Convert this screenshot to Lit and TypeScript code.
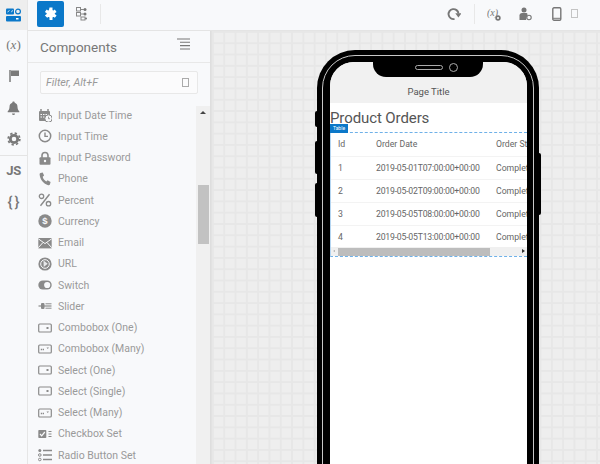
import { LitElement, html, css, svg } from "lit";
import { customElement } from "lit/decorators.js";

const G = "#8a8a8a";
const icons: Record<string, any> = {
  datetime: svg`<rect x="1" y="3" width="11" height="10" rx="1" fill="${G}"/><path d="M3 1v3M10 1v3" stroke="${G}" stroke-width="1.5"/><path d="M2.5 6.5h8M2.5 9h5" stroke="#f8f9fb" stroke-width="1" stroke-dasharray="1.5 1"/><circle cx="10.5" cy="10.5" r="3.7" fill="#f8f9fb" stroke="${G}" stroke-width="1"/><path d="M10.5 8.7v2h1.5" fill="none" stroke="${G}" stroke-width=".8"/>`,
  time: svg`<circle cx="7" cy="7" r="5.7" fill="none" stroke="${G}" stroke-width="1.5"/><path d="M7 3.5V7.4h3" fill="none" stroke="${G}" stroke-width="1.4"/>`,
  lock: svg`<path d="M4 7V4.5a3 3 0 0 1 6 0V7" fill="none" stroke="${G}" stroke-width="1.6"/><rect x="1.5" y="6.3" width="11" height="7.5" rx="1" fill="${G}"/><circle cx="7" cy="10" r="1.2" fill="#f8f9fb"/>`,
  phone: svg`<path d="M2.5 1l2.2-.6 1.4 3.2-1.4 1.1c.4 2 1.8 3.8 3.6 4.7l1.3-1.2 3 1.7-.7 2.5c-.2.6-1 1-1.7.8C5.6 11.900 2 7.500 1.600 2.300c0-.6.3-1.100.9-1.300z" fill="${G}"/>`,
  percent: svg`<circle cx="3.500" cy="3.300" r="2.200" fill="none" stroke="${G}" stroke-width="1.300"/><circle cx="10.500" cy="10.700" r="2.200" fill="none" stroke="${G}" stroke-width="1.300"/><path d="M11.500 1.200L2.500 12.800" stroke="${G}" stroke-width="1.400"/>`,
  currency: svg`<circle cx="7" cy="7" r="6.700" fill="${G}"/><text x="7" y="10.300" text-anchor="middle" font-size="9.500" font-weight="700" fill="#f8f9fb" font-family="Liberation Sans, sans-serif">$</text>`,
  email: svg`<rect x="0.300" y="2" width="13.400" height="10.400" fill="${G}"/><path d="M0.300 2.800L7 7.600l6.700-4.800M0.300 11.700L5 6.500M13.700 11.700L9 6.500" fill="none" stroke="#f8f9fb" stroke-width="1"/>`,
  url: svg`<circle cx="7" cy="7" r="6.600" fill="${G}"/><circle cx="7" cy="7" r="4.300" fill="none" stroke="#f8f9fb" stroke-width="1"/><path d="M5.500 3.500l4.200 3.300-4 3.200z" fill="#f8f9fb" opacity=".85"/>`,
  toggle: svg`<rect x="0.300" y="2.500" width="13.400" height="9" rx="4.500" fill="${G}"/><circle cx="9.200" cy="7" r="3.100" fill="#f8f9fb"/>`,
  slider: svg`<path d="M0.500 7h13" stroke="${G}" stroke-width="1.200"/><rect x="3" y="4" width="3.500" height="6" rx="1" fill="${G}"/><path d="M7.500 4.800h6M7.500 9.200h6" stroke="${G}" stroke-width="1"/>`,
  combo: svg`<rect x="0.700" y="3" width="12.600" height="8" rx="1" fill="none" stroke="${G}" stroke-width="1.200"/><rect x="8.500" y="6" width="2" height="2" fill="${G}"/>`,
  many: svg`<rect x="0.700" y="3" width="12.600" height="8" rx="1" fill="none" stroke="${G}" stroke-width="1.200"/><path d="M2.800 7.500h3.400" stroke="${G}" stroke-width="1.300" stroke-dasharray="1.300 .6"/><path d="M8.500 5.500h2.500L9.750 7z" fill="${G}"/>`,
  check: svg`<rect x="0.300" y="3" width="8" height="8" rx=".8" fill="${G}"/><path d="M2 7l1.700 1.800L6.800 5" fill="none" stroke="#f8f9fb" stroke-width="1.200"/><path d="M10.500 4.500h3M10.500 7h3M10.500 9.500h3" stroke="${G}" stroke-width="1"/>`,
  radio: svg`<circle cx="1.800" cy="2.500" r="1.500" fill="${G}"/><circle cx="1.800" cy="7" r="1.300" fill="none" stroke="${G}"/><circle cx="1.800" cy="11.500" r="1.300" fill="none" stroke="${G}"/><path d="M5 2.500h9M5 7h9M5 11.500h9" stroke="${G}" stroke-width="1.400"/>`,
};

const items: [string, string][] = [
  ["datetime", "Input Date Time"], ["time", "Input Time"], ["lock", "Input Password"], ["phone", "Phone"],
  ["percent", "Percent"], ["currency", "Currency"], ["email", "Email"], ["url", "URL"], ["toggle", "Switch"],
  ["slider", "Slider"], ["combo", "Combobox (One)"], ["many", "Combobox (Many)"], ["combo", "Select (One)"],
  ["combo", "Select (Single)"], ["many", "Select (Many)"], ["check", "Checkbox Set"], ["radio", "Radio Button Set"],
];

const rows = [
  ["1", "2019-05-01T07:00:00+00:00"], ["2", "2019-05-02T09:00:00+00:00"],
  ["3", "2019-05-05T08:00:00+00:00"], ["4", "2019-05-05T13:00:00+00:00"],
];

const icon = (name: string) => html`<svg class="ico" viewBox="0 0 14 14">${icons[name]}</svg>`;

@customElement("app-root")
export class AppRoot extends LitElement {
  static styles = css`
    :host { display: block; width: 600px; height: 464px; overflow: hidden; font-family: Roboto, "Open Sans", sans-serif; color: #777; background: #f8f9fb; }
    * { box-sizing: border-box; }
    .app { display: flex; width: 600px; height: 464px; }
    .rail { width: 28px; flex: none; display: flex; flex-direction: column; align-items: center; background: #f8f9fb; border-right: 1px solid #e6e6e6; }
    .rail-item { width: 100%; height: 31.300px; flex: none; display: flex; align-items: center; justify-content: center; color: #7a7a7a; }
    .rail-item.active { background: #eeeeee; height: 29.500px; }
    .rail-sep { border-top: 1px solid #e4e4e4; }
    .rail-text { font-family: "Liberation Serif", serif; font-size: 13px; color: #777; }
    .rail-js { font-weight: 700; font-size: 13px; letter-spacing: -0.400px; color: #777; }
    .rail-brace { font-weight: 500; font-size: 15px; gap: 2px; color: #777; }
    .main { flex: 1; display: flex; flex-direction: column; min-width: 0; }
    .toolbar { height: 31px; flex: none; display: flex; align-items: center; padding-left: 9px; padding-bottom: 3px; background: #f8f9fb; border-bottom: 1px solid #e4e4e4; }
    .tool-active { width: 27px; height: 26px; background: #0b78c9; border-radius: 2px; display: flex; align-items: center; justify-content: center; }
    .tool { margin-left: 8px; width: 18px; display: flex; justify-content: center; }
    .sep { width: 1px; height: 20px; background: #e8e8e8; margin-left: 10px; }
    .spacer { flex: 1; }
    .tright { display: flex; align-items: center; padding-right: 22px; }
    .t { display: flex; justify-content: center; }
    .sep-r { margin: 0 12px 0 13px; }
    .m20 { margin-left: 17px; }
    .m21 { margin-left: 20px; }
    .m9 { margin-left: 9px; }
    .small { width: 7px; height: 9px; border: 1px solid #c4c4c4; }
    .body { flex: 1; display: flex; min-height: 0; }
    .panel { width: 183px; flex: none; display: flex; flex-direction: column; background: #f8f9fb; border-right: 1px solid #dedede; }
    .phead { height: 32px; flex: none; display: flex; align-items: center; justify-content: space-between; padding: 1px 20px 0 12px; border-bottom: 1px solid #e8e8e8; font-size: 13.500px; color: #777; }
    .menu { margin-bottom: 6px; }
    .filter-wrap { padding: 8px 12px 0; height: 43px; flex: none; }
    .filter { height: 23px; border: 1px solid #e8e8e8; border-radius: 2px; background: #fbfbfc; display: flex; align-items: center; justify-content: space-between; padding: 0 8px 0 5px; font-size: 10.800px; font-style: italic; color: #999; }
    .glyph { width: 7px; height: 9px; border: 1px solid #aaa; }
    .list-wrap { flex: 1; display: flex; min-height: 0; }
    .list { flex: 1; margin-top: -1.500px; overflow: hidden; }
    .item { height: 21.250px; display: flex; align-items: center; gap: 6px; padding-left: 10px; font-size: 10.500px; color: #9a9a9a; white-space: nowrap; }
    .ico { width: 14px; height: 14px; flex: none; }
    .sb { width: 14px; flex: none; background: #f0f0f0; display: flex; flex-direction: column; align-items: center; }
    .sb-up { margin-top: 5px; width: 0; height: 0; border-left: 3px solid transparent; border-right: 3px solid transparent; border-bottom: 3px solid #444; }
    .sb-thumb { margin-top: 71px; width: 11px; height: 59px; background: #c2c2c2; }
    .canvas { flex: 1; position: relative; overflow: hidden; background-color: #eeeeee;
      background-image: linear-gradient(#e7e7e7 1.500px, transparent 1.500px), linear-gradient(90deg, #e7e7e7 1.500px, transparent 1.500px);
      background-size: 11.300px 11.300px; border-left: 1px solid #e2e2e2; }
    .phone { position: absolute; left: 105px; top: 19px; width: 222px; height: 460px; background: #000; border-radius: 38px; }
    .rim { position: absolute; inset: 5px; border: 1px solid #c8c8c8; border-radius: 33px; }
    .btn { position: absolute; background: #000; border-radius: 2px; width: 4px; }
    .screen { position: absolute; left: 13px; top: 12px; width: 197px; height: 440px; background: #fff; border-radius: 24px; overflow: hidden; display: flex; flex-direction: column; }
    .title { height: 41px; flex: none; background: #f1f1f1; display: flex; align-items: flex-end; justify-content: center; padding-bottom: 6px; font-size: 9.500px; color: #555; }
    .notch { position: absolute; left: 43px; top: 0; width: 110px; height: 15px; background: #000; border-radius: 0 0 13px 13px; }
    .speaker { position: absolute; left: 42px; top: 3px; width: 28px; height: 5px; border: 1px solid #aaa; border-radius: 3px; }
    .cam { position: absolute; left: 76px; top: 1px; width: 9px; height: 9px; border: 1px solid #aaa; border-radius: 50%; }
    .h1 { font-size: 15px; letter-spacing: -0.100px; height: 29px; line-height: 31px; flex: none; color: #555; white-space: nowrap; }
    .tbl { height: 125px; flex: none; border-top: 1px dashed #6fb1e8; border-bottom: 1px dashed #6fb1e8; border-left: 1px solid #b5d6f2; display: flex; flex-direction: column; position: relative; }
    .tag { position: absolute; left: -1px; top: -9px; width: 18px; height: 9px; background: #0b78c9; color: #fff; font-size: 5px; line-height: 9px; text-align: center; }
    .tr { height: 23px; flex: none; display: grid; grid-template-columns: 38px 120px 60px; align-items: center; padding-left: 7px; font-size: 8.700px; color: #666; border-bottom: 1px solid #f3f3f3; white-space: nowrap; overflow: hidden; }
    .tr.head { height: 23.500px; }
    .date { letter-spacing: -0.220px; }
    .hsb { height: 9px; margin-top: -1.500px; background: #f0f0f0; display: flex; align-items: center; padding-left: 7px; position: relative; flex: none; }
    .hsb-thumb { width: 152px; height: 8px; background: #bdbdbd; }
    .arr-l { position: absolute; left: 2px; top: 3px; width: 0; height: 0; border-top: 1.500px solid transparent; border-bottom: 1.500px solid transparent; border-right: 2px solid #aaa; }
    .arr-r { position: absolute; right: 2px; top: 2px; width: 0; height: 0; border-top: 2.500px solid transparent; border-bottom: 2.500px solid transparent; border-left: 3px solid #333; }
  `;

  render() {
    return html`<div class="app">
      <div class="rail">
        <div class="rail-item active"><svg width="15" height="14" viewBox="0 0 15 14"><rect x="0" y="0.500" width="8" height="6" rx="1" fill="#0b78c9"/><path d="M1.500 4l2-1.500M5.500 4.200l1-2" stroke="#fff" stroke-width=".8"/><circle cx="12" cy="3.500" r="2.400" fill="none" stroke="#0b78c9" stroke-width="1.200"/><rect x="0" y="8" width="15" height="5.500" rx="1" fill="#0b78c9"/><rect x="10" y="10" width="2.500" height="1.500" fill="#fff"/></svg></div>
        <div class="rail-item rail-text">(<i>x</i>)</div>
        <div class="rail-item"><svg width="12" height="14" viewBox="0 0 12 14"><path d="M2 1v12" stroke="#7a7a7a" stroke-width="1.500"/><path d="M3 1.500h8v5.500H3z" fill="#7a7a7a"/></svg></div>
        <div class="rail-item"><svg width="13" height="14" viewBox="0 0 13 14"><path d="M6.500 0.500c.8 0 1.200.5 1.200 1.200 2 .6 2.800 2.300 2.800 4.300 0 2 .7 3.200 1.800 4.300v1H.700v-1C1.800 9.200 2.500 8 2.500 6c0-2 .8-3.700 2.800-4.300 0-.7.400-1.200 1.200-1.200zM5 12.500h3a1.500 1.500 0 0 1-3 0z" fill="#7a7a7a"/></svg></div>
        <div class="rail-item"><svg width="14" height="14" viewBox="0 0 14 14"><circle cx="7" cy="7" r="3.700" fill="none" stroke="#7a7a7a" stroke-width="2.800"/><circle cx="7" cy="7" r="5.800" fill="none" stroke="#7a7a7a" stroke-width="1.800" stroke-dasharray="2.300 2.250"/></svg></div>
        <div class="rail-item rail-js rail-sep">JS</div>
        <div class="rail-item rail-brace"><span>{</span><span>}</span></div>
      </div>
      <div class="main">
        <div class="toolbar">
          <div class="tool-active"><svg width="14" height="14" viewBox="0 0 14 14"><path d="M5.500 0.500h3v2.200c0 .8.800 1 1.300.6l1-.7 1.800 2.400-1.500 1c-.5.400-.5 1 0 1.300l1.500 1.100-1.800 2.400-1-.7c-.6-.4-1.300-.1-1.300.6v2.300h-3v-2.300c0-.7-.7-1-1.300-.6l-1 .7L.900 8.400l1.500-1.100c.5-.3.500-.9 0-1.300L.900 5l1.800-2.400 1 .7c.5.400 1.300.2 1.300-.6z" fill="#fff"/></svg></div>
          <div class="tool"><svg width="11" height="14" viewBox="0 0 11 14"><rect x=".5" y=".5" width="4" height="3.500" fill="none" stroke="#888"/><rect x=".5" y="5.500" width="4" height="3.500" fill="none" stroke="#888"/><rect x="5" y="10" width="4" height="3" fill="none" stroke="#888"/><circle cx="9" cy="2.500" r="1.500" fill="#777"/><circle cx="9" cy="7" r="1.500" fill="#777"/><circle cx="10" cy="11.500" r="1" fill="#777"/><path d="M4.500 2.500H8M4.500 7H8" stroke="#888"/></svg></div>
          <div class="sep"></div>
          <div class="spacer"></div>
          <div class="tright">
            <div class="t"><svg width="14" height="14" viewBox="0 0 14 14"><path d="M11.500 6.500A5 5 0 1 0 7.500 12" fill="none" stroke="#777" stroke-width="1.900"/><path d="M8.300 6.300h6.200l-3.100 4.200z" fill="#777"/></svg></div>
            <div class="sep sep-r"></div>
            <div class="t"><svg width="15" height="14" viewBox="0 0 15 14"><text x="0" y="9" font-size="10" font-style="italic" font-family="Liberation Serif, serif" fill="#777">(x)</text><circle cx="11" cy="11" r="2.700" fill="#777"/><circle cx="11" cy="11" r="1" fill="#fff"/></svg></div>
            <div class="t m20"><svg width="13" height="14" viewBox="0 0 13 14"><circle cx="5" cy="3" r="2.500" fill="#777"/><path d="M0.500 13V8.500c0-1.500 1-2.500 2.500-2.500h4c1 0 1.500.5 1.500 1.500L7 13z" fill="#777"/><circle cx="10" cy="10.500" r="2.200" fill="#f8f9fb" stroke="#777" stroke-width="1.100"/></svg></div>
            <div class="t m21"><svg width="10" height="14" viewBox="0 0 10 14"><rect x=".8" y=".8" width="8" height="12.400" rx="1.200" fill="none" stroke="#777" stroke-width="1.400"/><path d="M1 11.300h8" stroke="#777"/></svg></div>
            <div class="t m9"><div class="small"></div></div>
          </div>
        </div>
        <div class="body">
          <div class="panel">
            <div class="phead"><span>Components</span><svg class="menu" width="13" height="12" viewBox="0 0 13 12"><path d="M0 1h13M3 4.300h10M3 7.600h10M3 11h10" stroke="#777" stroke-width="1.100"/></svg></div>
            <div class="filter-wrap"><div class="filter"><span>Filter, Alt+F</span><div class="glyph"></div></div></div>
            <div class="list-wrap">
              <div class="list">${items.map(([ic, label]) => html`<div class="item">${icon(ic)}<span>${label}</span></div>`)}</div>
              <div class="sb"><div class="sb-up"></div><div class="sb-thumb"></div></div>
            </div>
          </div>
          <div class="canvas">
            <div class="phone">
              <div class="rim"></div>
              <div class="btn" style="left:-2px;top:61px;height:16px"></div>
              <div class="btn" style="left:-2px;top:91px;height:33px"></div>
              <div class="btn" style="left:-2px;top:133px;height:34px"></div>
              <div class="btn" style="right:-2px;top:103px;height:62px"></div>
              <div class="screen">
                <div class="title">Page Title</div>
                <div class="notch"><div class="speaker"></div><div class="cam"></div></div>
                <div class="h1">Product Orders</div>
                <div class="tbl">
                  <div class="tag">Table</div>
                  <div class="tr head"><span>Id</span><span>Order Date</span><span>Order St</span></div>
                  ${rows.map(r => html`<div class="tr"><span>${r[0]}</span><span class="date">${r[1]}</span><span>Complet</span></div>`)}
                  <div class="hsb"><div class="arr-l"></div><div class="hsb-thumb"></div><div class="arr-r"></div></div>
                </div>
              </div>
            </div>
          </div>
        </div>
      </div>
    </div>`;
  }
}
